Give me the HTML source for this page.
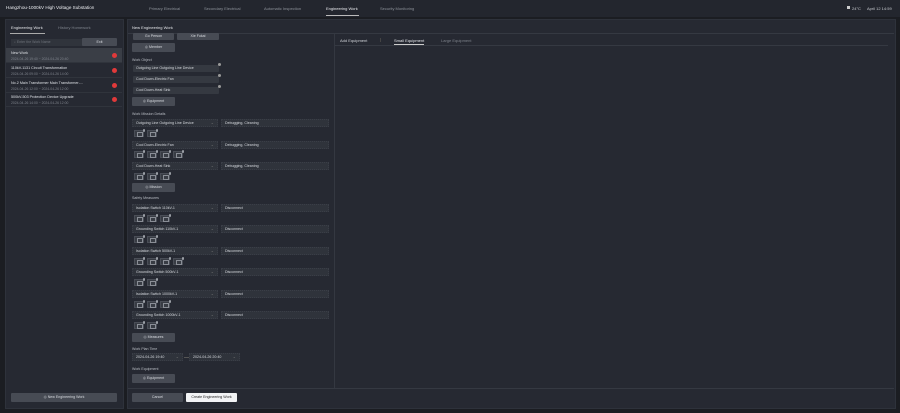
<!DOCTYPE html>
<html><head><meta charset="utf-8"><style>
*{margin:0;padding:0;box-sizing:border-box}
body{width:900px;height:413px;background:#1b1d22;font-family:"Liberation Sans",sans-serif;color:#c9ccd3;font-size:4px;position:relative;overflow:hidden}
.a{position:absolute;white-space:nowrap}
.top{left:0;top:0;width:900px;height:17px;background:#23262e}
.pan{background:#262932;border:1px solid #2e323b}
.btn{position:absolute;background:#474b54;border-radius:1px;color:#d8dbe0;text-align:center;font-size:3.6px;line-height:9px;height:9px}
.sel{position:absolute;background:#2f333b;border:1px dotted #3a3e47;height:8px;line-height:7px;padding-left:3px;font-size:3.6px;color:#d6d9de;width:86px}
.sel::after{content:"⌄";position:absolute;right:3px;top:-1px;color:#777;font-size:4px}
.inp{position:absolute;background:#2f333b;border:1px dotted #3a3e47;height:8px;line-height:7px;padding-left:3px;font-size:3.6px;color:#d6d9de;width:108px}
.obj{position:absolute;background:#353941;border-radius:1px;height:7px;line-height:7px;padding-left:3px;font-size:3.6px;color:#d6d9de;width:86px}
.obj::after{content:"";position:absolute;right:-2px;top:-2px;width:3px;height:3px;border-radius:50%;background:#999}
.ic{position:absolute;width:10px;height:7px;background:#383c44;border:1px solid #4a4e57}
.ic::before{content:"";position:absolute;left:2px;top:1px;width:4px;height:3px;border:.6px solid #8a8e96}
.ic::after{content:"";position:absolute;right:-2px;top:-2px;width:2.5px;height:2.5px;border-radius:50%;background:#9a9ea5}
.lbl{position:absolute;font-size:3.6px;color:#b8bcc3}
.it{position:absolute;left:6px;width:116px;height:15px;border-bottom:1px solid #30343c}
.it b{position:absolute;left:5px;top:3px;font-weight:normal;font-size:3.7px;color:#dde0e5}
.it i{position:absolute;left:5px;top:9px;font-style:normal;font-size:3.4px;color:#7d828b}
.it s{position:absolute;right:5px;top:5px;width:5px;height:5px;border-radius:50%;background:#e0393a}
</style></head><body>
<div class="a top"></div>
<div class="a" style="left:6px;top:5px;font-size:4.6px;color:#eceef2">Hangzhou-1000kV High Voltage Substation</div>
<div class="a" style="left:149px;top:6px;color:#8d929a">Primary Electrical</div>
<div class="a" style="left:204px;top:6px;color:#8d929a">Secondary Electrical</div>
<div class="a" style="left:264px;top:6px;color:#8d929a">Automatic Inspection</div>
<div class="a" style="left:326px;top:6px;color:#e8eaee">Engineering Work</div>
<div class="a" style="left:326px;top:15px;width:33px;height:1px;background:#bbb"></div>
<div class="a" style="left:380px;top:6px;color:#8d929a">Security Monitoring</div>
<div class="a" style="left:847px;top:6px;width:3px;height:3px;background:#ccc"></div>
<div class="a" style="left:852px;top:6px;color:#c8cbd0">24°C</div>
<div class="a" style="left:867px;top:6px;color:#c8cbd0">April 12 14:59</div>

<div class="a pan" style="left:5px;top:19px;width:119px;height:390px"></div>
<div class="a" style="left:11px;top:25px;color:#e4e6ea">Engineering Work</div>
<div class="a" style="left:10px;top:33px;width:35px;height:1px;background:#aaa"></div>
<div class="a" style="left:58px;top:25px;color:#7d828b">History Homework</div>
<div class="a" style="left:11px;top:39px;width:72px;height:7px;background:#30343c;color:#6f747c;font-size:3.5px;line-height:7px;padding-left:3px">⌕ Enter the Work Name</div>
<div class="btn" style="left:82px;top:38px;width:35px;height:8px;line-height:8px">Exit</div>
<div class="it" style="top:48px;background:#3a3e46"><b>New Work</b><i>2024-04-26 19:40 ~ 2024-04-26 20:40</i><s></s></div>
<div class="it" style="top:63px"><b>110kV-1131 Circuit Transformation</b><i>2024-04-26 09:00 ~ 2024-04-26 14:00</i><s></s></div>
<div class="it" style="top:78px"><b>No.2 Main Transformer Main Transformer-...</b><i>2024-04-26 12:00 ~ 2024-04-26 12:00</i><s></s></div>
<div class="it" style="top:92px"><b>500kV-503 Protection Device Upgrade</b><i>2024-04-26 14:00 ~ 2024-04-26 12:00</i><s></s></div>
<div class="btn" style="left:11px;top:393px;width:106px;height:9px">◎ New Engineering Work</div>

<div class="a pan" style="left:127px;top:19px;width:769px;height:390px"></div>
<div class="a" style="left:132px;top:25px;color:#e4e6ea">New Engineering Work</div>
<div class="a" style="left:128px;top:33px;width:766px;height:1px;background:#353942"></div>
<div class="a" style="left:334px;top:34px;width:1px;height:354px;background:#343841"></div>
<div class="a" style="left:340px;top:38px;color:#d0d3d8">Add Equipment</div>
<div class="a" style="left:380px;top:38px;width:1px;height:4px;background:#444"></div>
<div class="a" style="left:394px;top:38px;color:#e4e6ea">Small Equipment</div>
<div class="a" style="left:394px;top:44px;width:30px;height:1px;background:#ccc"></div>
<div class="a" style="left:441px;top:38px;color:#7d828b">Large Equipment</div>
<div class="a" style="left:335px;top:45px;width:553px;height:1px;background:#353942"></div>

<div class="btn" style="left:133px;top:33px;width:41px;height:7px;line-height:7px">Go Person</div>
<div class="btn" style="left:177px;top:33px;width:42px;height:7px;line-height:7px">Xie Fukai</div>
<div class="btn" style="left:132px;top:43px;width:43px">◎ Member</div>
<div class="lbl" style="left:132px;top:58px">Work Object</div>
<div class="obj" style="left:133px;top:65px">Outgoing Line Outgoing Line Device</div>
<div class="obj" style="left:133px;top:76px">Cool Down-Electric Fan</div>
<div class="obj" style="left:133px;top:87px">Cool Down-Heat Sink</div>
<div class="btn" style="left:132px;top:97px;width:43px">◎ Equipment</div>

<div class="lbl" style="left:132px;top:112px">Work Mission Details</div>
<div class="sel" style="left:132px;top:119px">Outgoing Line Outgoing Line Device</div><div class="inp" style="left:221px;top:119px">Debugging, Cleaning</div>
<div class="ic" style="left:134px;top:130px"></div><div class="ic" style="left:147px;top:130px"></div>
<div class="sel" style="left:132px;top:141px">Cool Down-Electric Fan</div><div class="inp" style="left:221px;top:141px">Debugging, Cleaning</div>
<div class="ic" style="left:134px;top:151px"></div><div class="ic" style="left:147px;top:151px"></div><div class="ic" style="left:160px;top:151px"></div><div class="ic" style="left:173px;top:151px"></div>
<div class="sel" style="left:132px;top:162px">Cool Down-Heat Sink</div><div class="inp" style="left:221px;top:162px">Debugging, Cleaning</div>
<div class="ic" style="left:134px;top:173px"></div><div class="ic" style="left:147px;top:173px"></div><div class="ic" style="left:160px;top:173px"></div>
<div class="btn" style="left:132px;top:183px;width:43px">◎ Mission</div>

<div class="lbl" style="left:132px;top:196px">Safety Measures</div>
<div class="sel" style="left:132px;top:204px">Isolation Switch 110kV-1</div><div class="inp" style="left:221px;top:204px">Disconnect</div>
<div class="ic" style="left:134px;top:215px"></div><div class="ic" style="left:147px;top:215px"></div><div class="ic" style="left:160px;top:215px"></div>
<div class="sel" style="left:132px;top:225px">Grounding Switch 110kV-1</div><div class="inp" style="left:221px;top:225px">Disconnect</div>
<div class="ic" style="left:134px;top:236px"></div><div class="ic" style="left:147px;top:236px"></div>
<div class="sel" style="left:132px;top:247px">Isolation Switch 500kV-1</div><div class="inp" style="left:221px;top:247px">Disconnect</div>
<div class="ic" style="left:134px;top:258px"></div><div class="ic" style="left:147px;top:258px"></div><div class="ic" style="left:160px;top:258px"></div><div class="ic" style="left:173px;top:258px"></div>
<div class="sel" style="left:132px;top:268px">Grounding Switch 500kV-1</div><div class="inp" style="left:221px;top:268px">Disconnect</div>
<div class="ic" style="left:134px;top:279px"></div><div class="ic" style="left:147px;top:279px"></div>
<div class="sel" style="left:132px;top:290px">Isolation Switch 1000kV-1</div><div class="inp" style="left:221px;top:290px">Disconnect</div>
<div class="ic" style="left:134px;top:301px"></div><div class="ic" style="left:147px;top:301px"></div><div class="ic" style="left:160px;top:301px"></div>
<div class="sel" style="left:132px;top:311px">Grounding Switch 1000kV-1</div><div class="inp" style="left:221px;top:311px">Disconnect</div>
<div class="ic" style="left:134px;top:322px"></div><div class="ic" style="left:147px;top:322px"></div>
<div class="btn" style="left:132px;top:333px;width:43px">◎ Measures</div>

<div class="lbl" style="left:132px;top:347px">Work Plan Time</div>
<div class="sel" style="left:132px;top:353px;width:51px">2024-04-26 19:40</div>
<div class="a" style="left:184px;top:357px;width:5px;height:1px;background:#555"></div>
<div class="sel" style="left:189px;top:353px;width:51px">2024-04-26 20:40</div>
<div class="lbl" style="left:132px;top:367px">Work Equipment</div>
<div class="btn" style="left:132px;top:374px;width:43px">◎ Equipment</div>

<div class="a" style="left:128px;top:388px;width:766px;height:1px;background:#353942"></div>
<div class="btn" style="left:132px;top:393px;width:51px">Cancel</div>
<div class="btn" style="left:186px;top:393px;width:51px;background:#f2f3f5;color:#222">Create Engineering Work</div>
</body></html>
